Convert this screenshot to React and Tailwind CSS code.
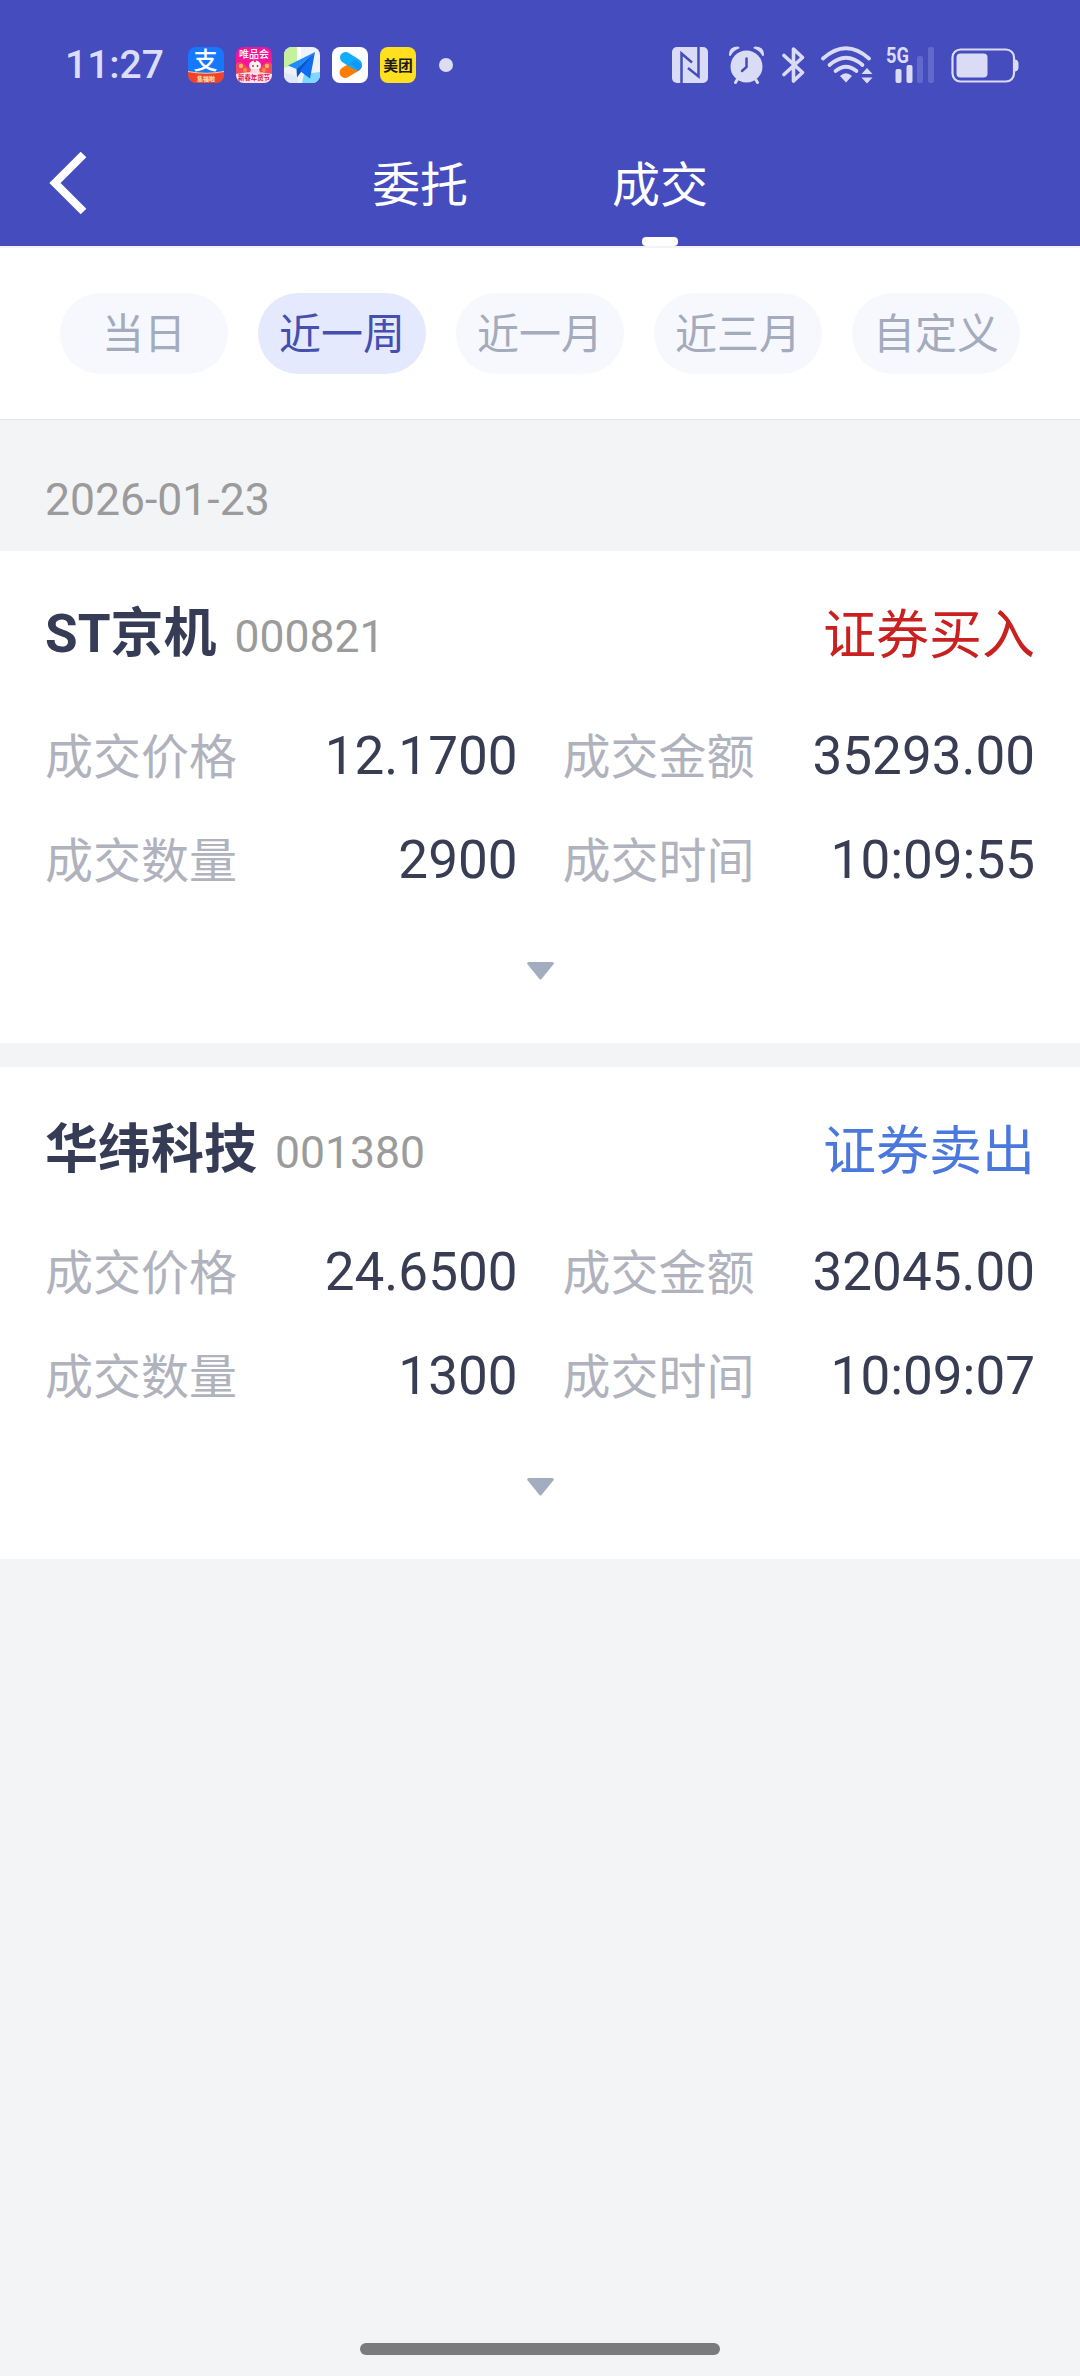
import { useState } from "react";

const TABS = ["委托", "成交"];
const RANGES = ["当日", "近一周", "近一月", "近三月", "自定义"];

const DEALS = [
  {
    name: "ST京机",
    code: "000821",
    side: "buy",
    price: "12.1700",
    amount: "35293.00",
    count: "2900",
    time: "10:09:55",
  },
  {
    name: "华纬科技",
    code: "001380",
    side: "sell",
    price: "24.6500",
    amount: "32045.00",
    count: "1300",
    time: "10:09:07",
  },
];

function AppIcons() {
  return (
    <div className="ml-[24px] flex items-center gap-3">
      {/* Alipay */}
      <svg className="size-9" viewBox="0 0 36 36">
        <clipPath id="alipay">
          <rect width="36" height="36" rx="8" />
        </clipPath>
        <g clipPath="url(#alipay)">
          <rect width="36" height="36" fill="#1677ff" />
          <text x="17.5" y="22" textAnchor="middle" fontSize="24" fontWeight="500" fill="#fff">支</text>
          <path d="M0 24.5Q18 28 36 24.5V36H0Z" fill="#f0432c" />
          <path d="M0 24.5Q18 28 36 24.5" stroke="#ffc9a0" strokeWidth="1" fill="none" />
          <text x="18" y="33.5" textAnchor="middle" fontSize="6" fontWeight="700" fill="#ffe9c8">集福啦</text>
        </g>
      </svg>
      {/* Vipshop */}
      <svg className="size-9" viewBox="0 0 36 36">
        <clipPath id="vip">
          <rect width="36" height="36" rx="8" />
        </clipPath>
        <g clipPath="url(#vip)">
          <rect width="36" height="36" fill="#f5149a" />
          <path d="M0 17q4-4 8 0l4 4h12l5-5q4-2 7 1v11H0Z" fill="#f2495f" />
          <circle cx="5" cy="19" r="2.2" fill="#ffb45c" />
          <circle cx="9" cy="23" r="2" fill="#ff8a3c" />
          <circle cx="31" cy="19" r="2.2" fill="#ffb45c" />
          <circle cx="28" cy="23" r="2" fill="#ff8a3c" />
          <path d="M0 27q18-4 36 0v9H0Z" fill="#ffe3e6" />
          <ellipse cx="19" cy="18.5" rx="6" ry="5" fill="#fff0f4" />
          <path d="M15 22h8l1 4h-10Z" fill="#ffd9e2" />
          <circle cx="17" cy="19" r="0.9" fill="#a8324f" />
          <circle cx="21.5" cy="19" r="0.9" fill="#a8324f" />
          <circle cx="19" cy="14" r="1.2" fill="#e8384f" />
          <text x="18" y="10.6" textAnchor="middle" fontSize="10" fontWeight="500" fill="#fff">唯品会</text>
          <text x="18" y="33.2" textAnchor="middle" fontSize="6.4" fontWeight="700" fill="#e0174f">新春年货节</text>
        </g>
      </svg>
      {/* Amap */}
      <svg className="size-9" viewBox="0 0 36 36">
        <clipPath id="amap">
          <rect width="36" height="36" rx="8" />
        </clipPath>
        <g clipPath="url(#amap)">
          <rect width="36" height="36" fill="#eef3fb" />
          <path d="M0 0h13v17L0 21Z" fill="#c5f09c" />
          <path d="M13 0h4v16l-4 2Z" fill="#fff" />
          <path d="M0 25l14 5v6H0Z" fill="#dfe8f6" />
          <path d="M20 27l16-2v11H18Z" fill="#7fd8ff" />
          <path d="M31 5L4 18.5L12.5 22Z" fill="#1e8bff" />
          <path d="M31 5L12.5 22L13 30.5L17 25Z" fill="#0a56c8" />
          <path d="M31 5L16 24L26 31.5Z" fill="#0f6df0" />
        </g>
      </svg>
      {/* Youku */}
      <svg className="size-9" viewBox="0 0 36 36">
        <rect width="36" height="36" rx="8" fill="#fff" />
        <path d="M13 25.5L24 19" stroke="#ff7d00" strokeWidth="11" strokeLinecap="round" />
        <path d="M13.5 10.5L24.5 17.5" stroke="#10aef8" strokeWidth="11" strokeLinecap="round" />
        <path d="M30 18q0 4-4 6q-4-6-9-6.5l6-5Z" fill="#1896f5" />
      </svg>
      {/* Meituan */}
      <svg className="size-9" viewBox="0 0 36 36">
        <rect width="36" height="36" rx="8" fill="#ffe01e" />
        <text x="18" y="23.5" textAnchor="middle" fontSize="14.8" fontWeight="700" fill="#1a1a1a">美团</text>
      </svg>
      <span className="ml-[11px] size-3.5 rounded-full bg-[#dcdcf5]" />
    </div>
  );
}

function SystemIcons() {
  return (
    <div className="ml-auto flex items-start text-[#dadcf6]">
      {/* NFC */}
      <svg className="mt-px h-9 w-9" viewBox="0 0 36 36" fill="none">
        <rect width="36" height="36" rx="5" fill="currentColor" />
        <path d="M9.500 36V6.500L20 15.500" stroke="#444cbe" strokeWidth="2.500" />
        <path d="M26.500 0V29.500L16 21" stroke="#444cbe" strokeWidth="2.500" />
      </svg>
      {/* Alarm */}
      <svg className="ml-5 h-[38px] w-[37px]" viewBox="0 0 37 38" fill="none">
        <circle cx="18.5" cy="20.5" r="16" fill="currentColor" />
        <path d="M1 9.500Q0.500 0.500 10 0.500L12 2Q5 4.500 2.500 10ZM36 9.500Q36.500 0.500 27 0.500L25 2Q32 4.500 34.500 10Z" fill="currentColor" />
        <path d="M9 34L7.500 36.500M28 34L29.500 36.500" stroke="currentColor" strokeWidth="3" strokeLinecap="round" />
        <path d="M18.500 12.500V21L14 25" stroke="#444cbe" strokeWidth="2.500" strokeLinecap="round" />
      </svg>
      {/* Bluetooth */}
      <svg className="ml-[17px] h-[38px] w-6" viewBox="0 0 24 38" fill="none">
        <path d="M2 9.500L20.500 26.500L11.500 35V3L20.500 11.500L2 28.500" stroke="currentColor" strokeWidth="3.600" strokeLinejoin="round" strokeLinecap="round" />
      </svg>
      {/* Wifi */}
      <svg className="ml-[15px] h-[38px] w-[52px]" viewBox="0 0 52 38" fill="none">
        <path d="M2 12.500Q25 -8 48 12.500" stroke="currentColor" strokeWidth="3.700" strokeLinecap="round" />
        <path d="M8.500 19Q25 4.500 41.500 19" stroke="currentColor" strokeWidth="3.700" strokeLinecap="round" />
        <path d="M14.500 25Q25 16.500 35.500 25" stroke="currentColor" strokeWidth="3.700" strokeLinecap="round" />
        <path d="M19 30Q25 24.500 31 30L25 36.500Z" fill="currentColor" />
        <path d="M46 22L51.500 28H40.500ZM46 37.500L51.500 31.500H40.500Z" fill="currentColor" />
      </svg>
      {/* 5G signal */}
      <svg className="ml-[13px] h-[38px] w-[49px] overflow-visible" viewBox="0 0 49 38">
        <text x="0" y="16.5" textLength="23" lengthAdjust="spacingAndGlyphs" fontSize="22" fontWeight="700" fill="currentColor">5G</text>
        <rect x="9.5" y="23" width="6" height="14" rx="2" fill="currentColor" />
        <rect x="20.5" y="19" width="6" height="18" rx="2" fill="currentColor" />
        <rect x="31" y="10" width="6" height="27" rx="2" fill="#6269cc" />
        <rect x="42" y="1" width="6" height="36" rx="2" fill="#6269cc" />
      </svg>
      {/* Battery */}
      <svg className="ml-4 h-[38px] w-[68px]" viewBox="0 0 68 38">
        <rect x="1.5" y="3.500" width="61.500" height="32" rx="8" fill="none" stroke="currentColor" strokeWidth="2.200" />
        <rect x="5.500" y="7.500" width="31" height="24" rx="4" fill="currentColor" />
        <path d="M64 13.500q3.500 0.500 3.500 3.500v5q0 3-3.500 3.500Z" fill="currentColor" />
      </svg>
    </div>
  );
}

function StatusBar() {
  return (
    <div className="flex h-[130px] items-center pr-[61px] pl-[65px]">
      <span className="text-[39px] leading-none font-medium text-[#dcdcff]">11:27</span>
      <AppIcons />
      <SystemIcons />
    </div>
  );
}

function Field({ label, value }) {
  return (
    <div className="flex h-[104px] items-center justify-between">
      <span className="pt-[3px] text-[48px] leading-none text-[#b0b2bd]">{label}</span>
      <span className="text-[53px] leading-none text-[#383d54]">{value}</span>
    </div>
  );
}

function DealCard({ deal }) {
  const buy = deal.side === "buy";
  return (
    <section className="h-[492px] bg-white px-[45px] pt-[45px]">
      <div className="flex h-[108px] items-baseline leading-[76px]">
        <h2 className="text-[53px] font-bold text-[#373c56]">{deal.name}</h2>
        <span className="ml-[18px] text-[44.5px] text-[#9b9b9b]">{deal.code}</span>
        <span className={`ml-auto self-start pt-[2px] text-[53px] ${buy ? "text-[#c92020]" : "text-[#4a78dc]"}`}>
          {buy ? "证券买入" : "证券卖出"}
        </span>
      </div>
      <div className="grid grid-cols-2 gap-x-[45px]">
        <Field label="成交价格" value={deal.price} />
        <Field label="成交金额" value={deal.amount} />
        <Field label="成交数量" value={deal.count} />
        <Field label="成交时间" value={deal.time} />
      </div>
      <button className="mx-auto mt-[50px] block">
        <svg className="h-[18px] w-[27px]" viewBox="0 0 26 18" preserveAspectRatio="none">
          <path d="M1.500 0H24.500Q26.500 0.500 25.500 2.200L14 17Q13 18 12 17L0.500 2.200Q-0.500 0.500 1.500 0Z" fill="#a3adc0" />
        </svg>
      </button>
    </section>
  );
}

function App() {
  const [tab, setTab] = useState("成交");
  const [range, setRange] = useState("近一周");

  return (
    <div className="flex h-[2376px] w-[1080px] flex-col bg-[#f3f4f6] font-['Roboto','Noto_Sans_CJK_SC',sans-serif]">
      <header className="h-[246px] bg-[#444cbe] text-white">
        <StatusBar />
        <div className="grid h-[116px] grid-cols-[300px_1fr_300px]">
          <button className="flex items-start pt-[21px] pl-[48px]">
            <svg className="h-[64px] w-[40px]" viewBox="0 0 40 64" fill="none">
              <path d="M35.500 3.500L7 32L35.500 60.500" stroke="currentColor" strokeWidth="8" />
            </svg>
          </button>
          <nav className="grid grid-cols-2">
            {TABS.map((t) => (
              <button key={t} onClick={() => setTab(t)} className="flex flex-col items-center justify-between text-[48px]">
                <span className="pt-[18px] leading-[76px]">{t}</span>
                <span className={`h-[9px] w-9 rounded ${tab === t ? "bg-white" : ""}`} />
              </button>
            ))}
          </nav>
        </div>
      </header>

      <div className="flex h-[173px] items-start justify-between border-t-2 border-[#f3f4f7] bg-white px-[60px] pt-[45px]">
        {RANGES.map((r) => (
          <button
            key={r}
            onClick={() => setRange(r)}
            className={`h-[81px] w-[168px] rounded-full pt-[3px] text-[42px] leading-[78px] ${
              range === r ? "bg-[#e4e9fe] text-[#444fb0]" : "bg-[#f6f8fd] text-[#a3abbc]"
            }`}
          >
            {r}
          </button>
        ))}
      </div>

      <div className="h-[132px] border-t border-[#e4e5e7] px-[45px] pt-[46px] text-[44.5px] leading-[68px] text-[#9b9b9b]">
        2026-01-23
      </div>

      <main className="flex flex-col gap-6">
        {DEALS.map((deal) => (
          <DealCard key={deal.code} deal={deal} />
        ))}
      </main>

      <div className="mx-auto mt-auto mb-[21px] h-3 w-[360px] rounded-full bg-[#7b7b7b]" />
    </div>
  );
}

export default App;
